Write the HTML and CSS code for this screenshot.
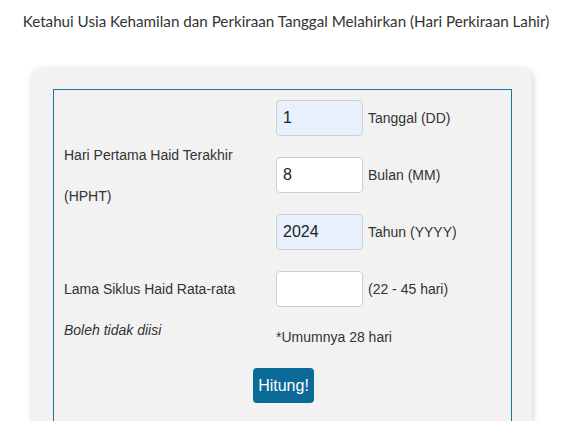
FILE: index.html
```html
<!DOCTYPE html>
<html lang="id">
<head>
<meta charset="utf-8">
<title>Kalkulator HPL</title>
<link rel="stylesheet" href="styles.css">
</head>
<body>
<h1 class="title">Ketahui Usia Kehamilan dan Perkiraan Tanggal Melahirkan (Hari Perkiraan Lahir)</h1>
<div class="card">
  <div class="box">
    <form class="form">
      <div class="label-hpht">
        <span>Hari Pertama Haid Terakhir</span>
        <span>(HPHT)</span>
      </div>
      <input class="field autofill" type="text" value="1">
      <span class="unit">Tanggal (DD)</span>
      <input class="field" type="text" value="8">
      <span class="unit">Bulan (MM)</span>
      <input class="field autofill" type="text" value="2024">
      <span class="unit">Tahun (YYYY)</span>
      <div class="label">Lama Siklus Haid Rata-rata</div>
      <input class="field" type="text" value="">
      <span class="unit">(22 - 45 hari)</span>
      <div class="note-left">Boleh tidak diisi</div>
      <div class="note-right">*Umumnya 28 hari</div>
      <div class="actions"><button type="button" class="btn">Hitung!</button></div>
    </form>
  </div>
</div>
</body>
</html>
```
FILE: styles.css
```css
html, body {
  margin: 0;
  padding: 0;
  background: #ffffff;
}
body {
  font-family: "Liberation Sans", Arial, sans-serif;
  color: #333333;
  height: 421px;
  overflow: hidden;
}
.title {
  margin: 0;
  padding: 11px 0 0;
  height: 58px;
  box-sizing: border-box;
  text-align: center;
  font-family: Lato, "Noto Sans", sans-serif;
  font-weight: 400;
  font-size: 15.2px;
  line-height: 20px;
  color: #333333;
}
.card {
  margin: 11px 40px 0 32px;
  background: #f2f2f2;
  border-radius: 9px 9px 0 0;
  box-shadow: 1px 1px 7px rgba(0, 0, 0, 0.18);
  padding: 20px 20px 0 21px;
  height: 352px;
  box-sizing: border-box;
}
.box {
  border: 1px solid #1a78a0;
  border-bottom: none;
  height: 332px;
  padding: 10px 10px 0 10px;
  box-sizing: border-box;
}
.form {
  display: grid;
  grid-template-columns: 212px 87px 1fr;
  grid-template-rows: repeat(4, 35px) 18px auto;
  row-gap: 22px;
  column-gap: 0;
  align-items: center;
  font-family: "Liberation Sans", Arial, sans-serif;
  font-size: 14px;
}
.label-hpht {
  grid-column: 1;
  grid-row: 1 / span 3;
  display: flex;
  flex-direction: column;
  gap: 25px;
  line-height: 16px;
  margin-top: 1px;
}
.label {
  grid-column: 1;
  line-height: 16px;
}
.field {
  grid-column: 2;
  width: 87px;
  height: 36px;
  box-sizing: border-box;
  border: 1px solid #cfcfcf;
  border-radius: 4px;
  background: #ffffff;
  padding: 0 6px;
  font-family: "Liberation Sans", Arial, sans-serif;
  font-size: 16px;
  color: #222222;
  margin: 0;
}
.field.autofill {
  background: #e8f0fe;
}
.unit {
  grid-column: 3;
  padding-left: 5px;
  line-height: 16px;
}
.note-left {
  grid-column: 1;
  font-style: italic;
  line-height: 16px;
  align-self: start;
  margin-top: -6px;
}
.note-right {
  grid-column: 2 / span 2;
  line-height: 16px;
  align-self: start;
  margin-top: 1px;
}
.actions {
  grid-column: 1 / -1;
  display: flex;
  justify-content: center;
  padding-left: 2px;
}
.btn {
  background: #0b6a98;
  color: #ffffff;
  border: none;
  border-radius: 4px;
  width: 61px;
  height: 35px;
  padding: 0;
  font-family: "Liberation Sans", Arial, sans-serif;
  font-size: 16px;
}
```
